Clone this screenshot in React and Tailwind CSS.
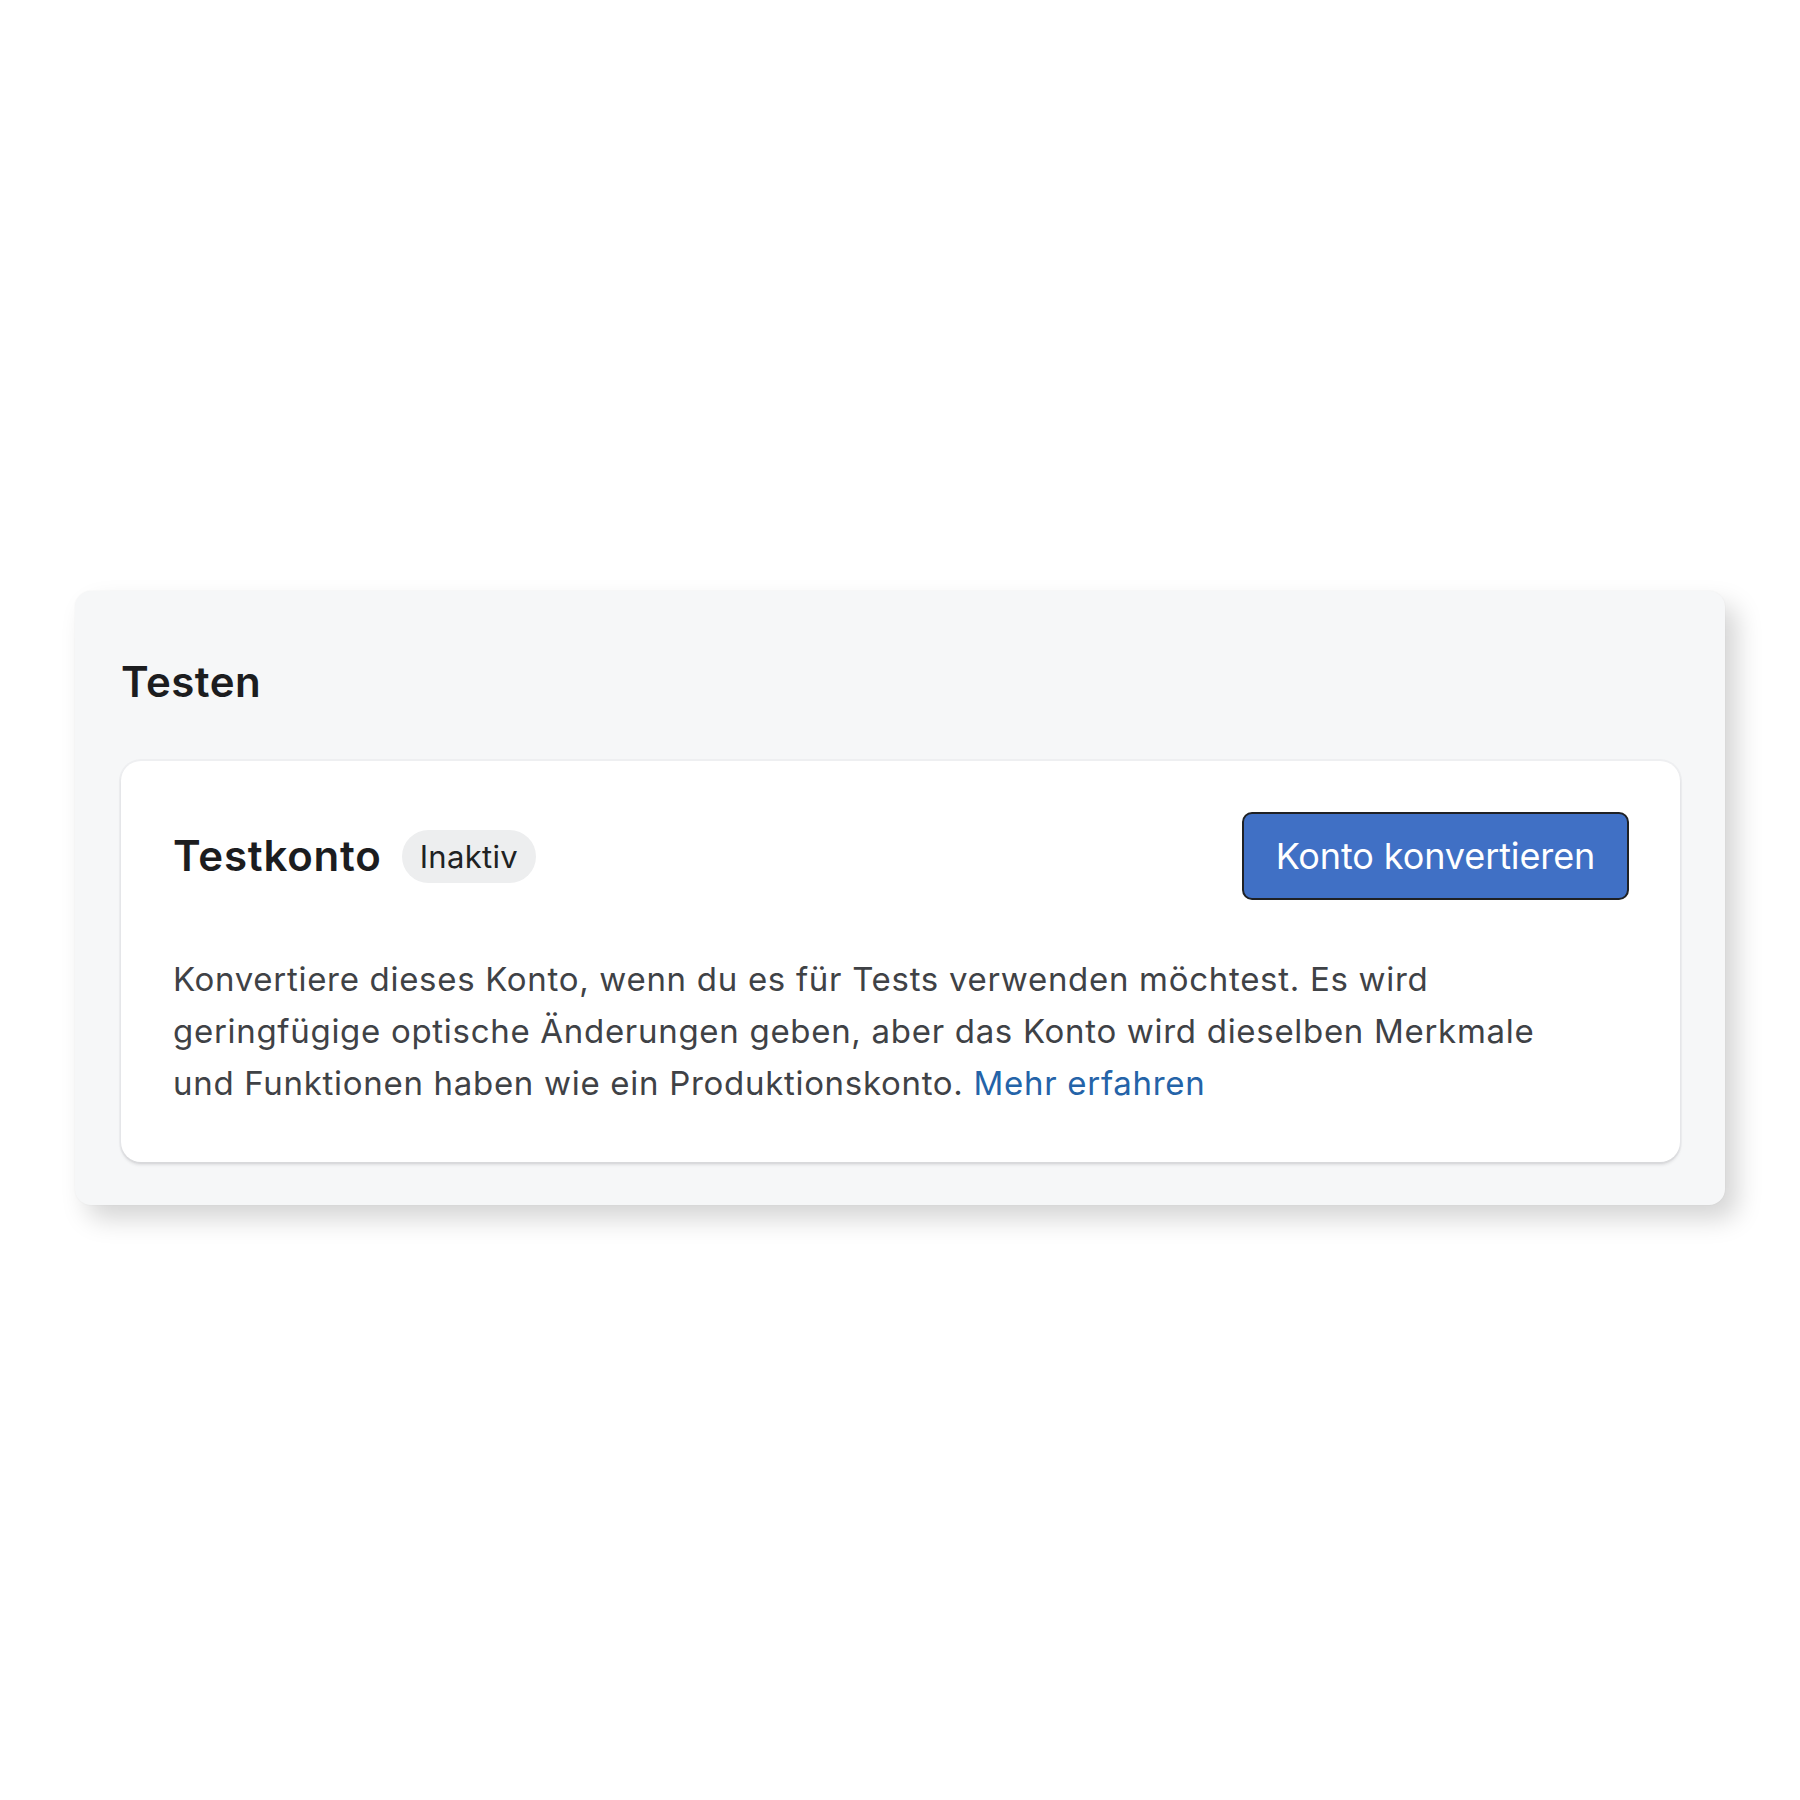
export default function App() {
  return (
    <div className="w-[1800px] h-[1800px] bg-white pt-[591px] pl-[75px]" style={{ fontFamily: 'Inter, "Noto Sans", sans-serif' }}>
      <div className="w-[1650px] bg-[#f6f7f8] rounded-[16px] pt-[66px] pb-[43px] pl-[46px] pr-[45px] shadow-[12px_14px_26px_rgba(0,0,0,0.17),0_0_2px_rgba(0,0,0,0.05)]">
        <h2 className="text-[42px] leading-[50px] font-semibold text-[#1c1d1f] tracking-[0.5px]">Testen</h2>
        <div className="mt-[54px] bg-white rounded-[20px] pt-[51px] pb-[53px] pl-[52px] pr-[51px] shadow-[0_0_0_2px_rgba(63,63,68,0.04),0_3px_3px_rgba(63,63,68,0.13)]">
          <div className="flex items-center justify-between h-[88px]">
            <div className="flex items-center gap-[20px]">
              <span className="text-[42px] leading-[50px] font-semibold text-[#1c1d1f] tracking-[0.8px]">Testkonto</span>
              <span className="h-[53px] px-[18px] rounded-full bg-[#edeeef] text-[31px] leading-[53px] text-[#202223] tracking-[0.3px] flex items-center">Inaktiv</span>
            </div>
            <button className="w-[387px] h-[88px] rounded-[10px] border-2 border-[#1f2124] bg-[#4070c5] text-white text-[36px] font-normal tracking-[-0.1px] flex items-center justify-center">
              Konto konvertieren
            </button>
          </div>
          <p className="mt-[53px] text-[33px] leading-[52px] text-[#3f4246] tracking-[0.7px]">
            Konvertiere dieses Konto, wenn du es für Tests verwenden möchtest. Es wird<br />
            geringfügige optische Änderungen geben, aber das Konto wird dieselben Merkmale<br />
            und Funktionen haben wie ein Produktionskonto.{' '}
            <a className="text-[#2463a8]">Mehr erfahren</a>
          </p>
        </div>
      </div>
    </div>
  );
}
